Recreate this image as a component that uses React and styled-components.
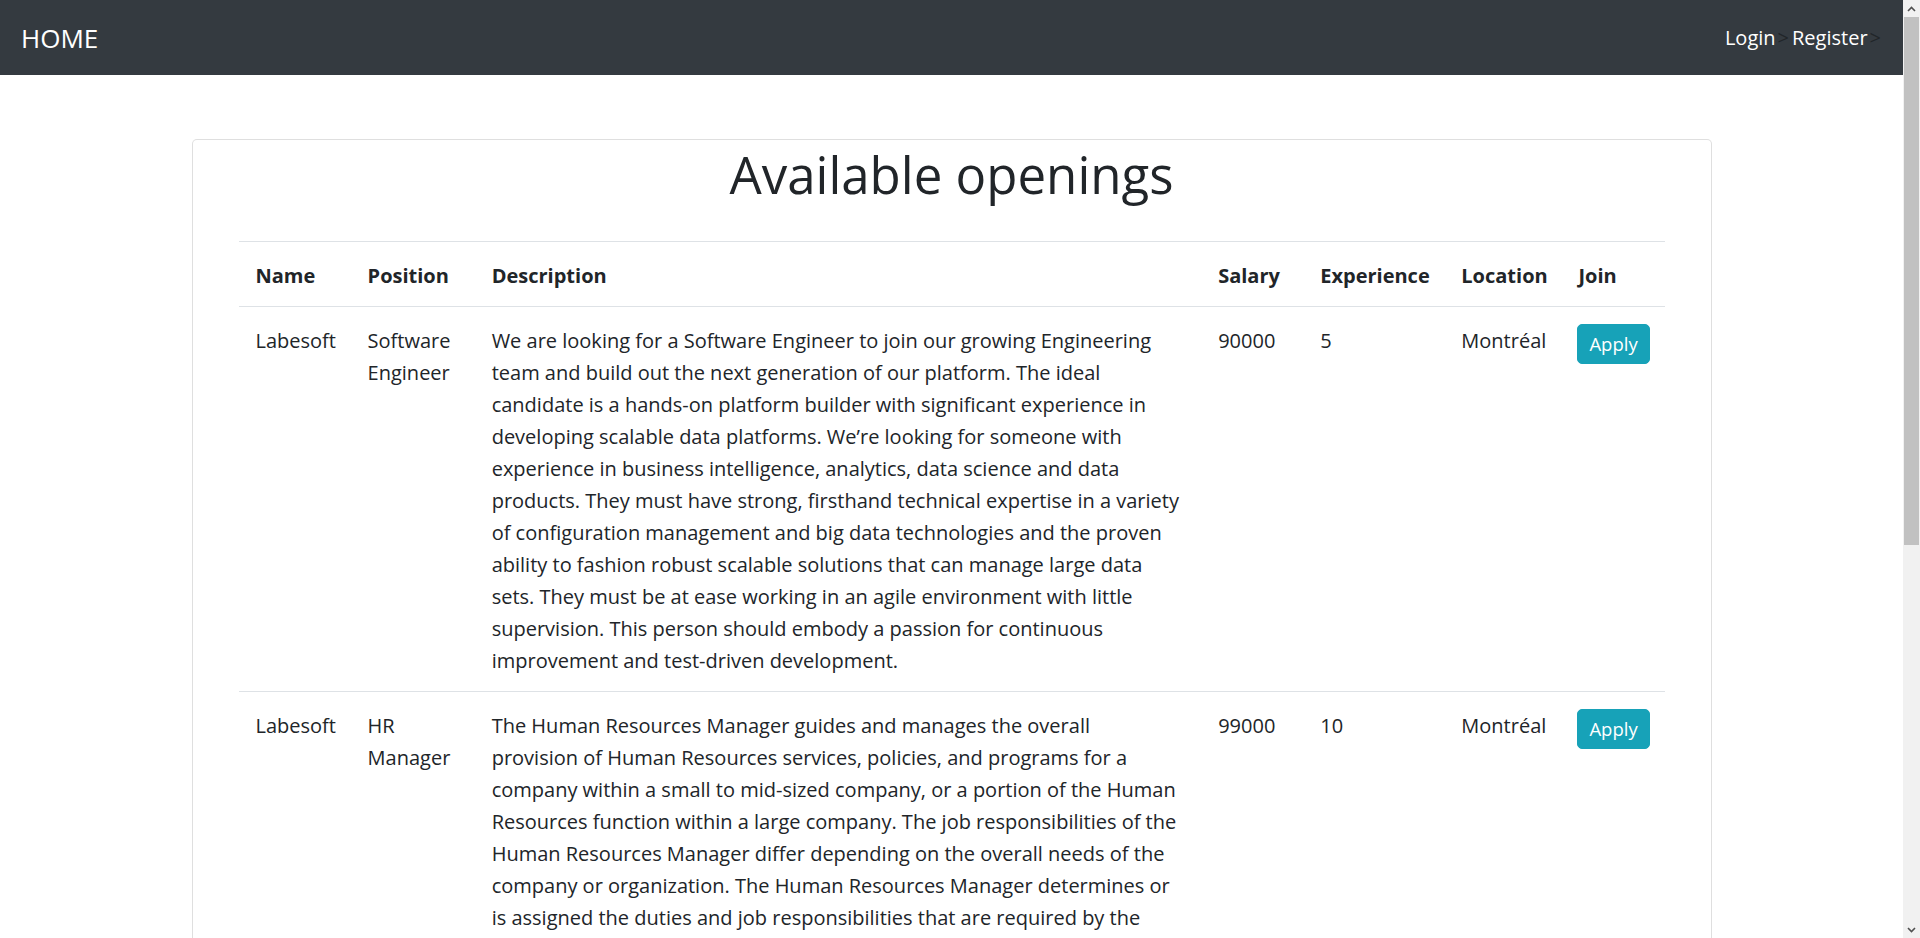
import React from "react";
import styled, { createGlobalStyle } from "styled-components";

const GlobalStyle = createGlobalStyle`
  html, body {
    margin: 0;
    padding: 0;
    background: #fff;
  }
  body {
    font-family: "Open Sans", "Noto Sans", sans-serif;
    color: #212529;
    font-size: 20px;
    line-height: 32px;
  }
  * { box-sizing: border-box; }
`;

const Page = styled.div`
  margin-right: 17px;
`;

const NavBar = styled.nav`
  height: 75px;
  background: #343a40;
  display: flex;
  align-items: center;
  justify-content: space-between;
  padding: 0 22px 0 21px;
`;

const Brand = styled.a`
  color: #fff;
  font-size: 26px;
  line-height: 34px;
  text-decoration: none;
  padding-top: 1px;
`;

const NavLinks = styled.div`
  display: flex;
  align-items: center;
  line-height: 30px;
  font-size: 20px;
`;

const NavLink = styled.a`
  color: #fff;
  text-decoration: none;
  margin-left: ${(p) => (p.$gap ? "3px" : "0")};
`;

const Caret = styled.span`
  color: #212529;
  margin-left: 2px;
`;

const Card = styled.section`
  width: 1520px;
  margin: 64px auto 0;
  border: 1px solid rgba(0, 0, 0, 0.125);
  border-radius: 5px;
  padding: 2px 46px 24px;
  background: #fff;
`;

const Title = styled.h1`
  margin: 0 0 35px;
  font-size: 51px;
  font-weight: 400;
  line-height: 64px;
  text-align: center;
  color: #212529;
`;

const Table = styled.table`
  width: 100%;
  border-collapse: collapse;
  table-layout: fixed;
`;

const Th = styled.th`
  text-align: left;
  font-weight: 700;
  padding: 18px 16px 14px 17px;
  border-top: 1px solid #dee2e6;
  border-bottom: 1px solid #dee2e6;
  vertical-align: bottom;
  white-space: nowrap;
`;

const Td = styled.td`
  padding: 18px 16px 14px 17px;
  border-top: 1px solid #dee2e6;
  vertical-align: top;
`;

const DescLine = styled.span`
  display: block;
  white-space: nowrap;
`;

const ApplyButton = styled.button`
  display: block;
  margin-top: -1px;
  margin-left: -1px;
  height: 40px;
  padding: 0 11px;
  font-family: "Open Sans", "Noto Sans", sans-serif;
  font-size: 18.5px;
  line-height: 38px;
  color: #fff;
  background: #17a2b8;
  border: 1px solid #17a2b8;
  border-radius: 5px;
  cursor: pointer;
`;

const ScrollBar = styled.div`
  position: fixed;
  top: 0;
  right: 0;
  width: 17px;
  height: 100vh;
  background: #f1f1f1;
  display: flex;
  flex-direction: column;
`;

const ScrollArrow = styled.div`
  height: 17px;
  display: flex;
  align-items: center;
  justify-content: center;
  flex: none;
`;

const ScrollTrack = styled.div`
  flex: 1;
  padding: 0 1px;
`;

const ScrollThumb = styled.div`
  height: 528px;
  background: #c1c1c1;
`;

const columns = [
  { label: "Name", width: 112 },
  { label: "Position", width: 124 },
  { label: "Description", width: 726 },
  { label: "Salary", width: 102 },
  { label: "Experience", width: 141 },
  { label: "Location", width: 117 },
  { label: "Join", width: 103 },
];

const jobs = [
  {
    name: "Labesoft",
    position: "Software Engineer",
    description: [
      "We are looking for a Software Engineer to join our growing Engineering",
      "team and build out the next generation of our platform. The ideal",
      "candidate is a hands-on platform builder with significant experience in",
      "developing scalable data platforms. We’re looking for someone with",
      "experience in business intelligence, analytics, data science and data",
      "products. They must have strong, firsthand technical expertise in a variety",
      "of configuration management and big data technologies and the proven",
      "ability to fashion robust scalable solutions that can manage large data",
      "sets. They must be at ease working in an agile environment with little",
      "supervision. This person should embody a passion for continuous",
      "improvement and test-driven development.",
    ],
    salary: "90000",
    experience: "5",
    location: "Montréal",
  },
  {
    name: "Labesoft",
    position: "HR Manager",
    description: [
      "The Human Resources Manager guides and manages the overall",
      "provision of Human Resources services, policies, and programs for a",
      "company within a small to mid-sized company, or a portion of the Human",
      "Resources function within a large company. The job responsibilities of the",
      "Human Resources Manager differ depending on the overall needs of the",
      "company or organization. The Human Resources Manager determines or",
      "is assigned the duties and job responsibilities that are required by the",
      "organization.",
    ],
    salary: "99000",
    experience: "10",
    location: "Montréal",
  },
];

function Chevron({ down }) {
  return (
    <svg width="9" height="6" viewBox="0 0 9 6">
      <path
        d={down ? "M1 1 L4.5 4.5 L8 1" : "M1 5 L4.5 1.5 L8 5"}
        fill="none"
        stroke="#505050"
        strokeWidth="1.6"
      />
    </svg>
  );
}

export default function App() {
  return (
    <>
      <GlobalStyle />
      <Page>
        <NavBar>
          <Brand href="#">HOME</Brand>
          <NavLinks>
            <NavLink href="#">Login</NavLink>
            <Caret>&gt;</Caret>
            <NavLink href="#" $gap>
              Register
            </NavLink>
            <Caret>&gt;</Caret>
          </NavLinks>
        </NavBar>
        <Card>
          <Title>Available openings</Title>
          <Table>
            <colgroup>
              {columns.map((c) => (
                <col key={c.label} style={{ width: c.width }} />
              ))}
            </colgroup>
            <thead>
              <tr>
                {columns.map((c) => (
                  <Th key={c.label}>{c.label}</Th>
                ))}
              </tr>
            </thead>
            <tbody>
              {jobs.map((j, i) => (
                <tr key={i}>
                  <Td>{j.name}</Td>
                  <Td>{j.position}</Td>
                  <Td>
                    {j.description.map((line, k) => (
                      <DescLine key={k}>{line}</DescLine>
                    ))}
                  </Td>
                  <Td>{j.salary}</Td>
                  <Td>{j.experience}</Td>
                  <Td>{j.location}</Td>
                  <Td>
                    <ApplyButton>Apply</ApplyButton>
                  </Td>
                </tr>
              ))}
            </tbody>
          </Table>
        </Card>
      </Page>
      <ScrollBar aria-hidden="true">
        <ScrollArrow>
          <Chevron />
        </ScrollArrow>
        <ScrollTrack>
          <ScrollThumb />
        </ScrollTrack>
        <ScrollArrow>
          <Chevron down />
        </ScrollArrow>
      </ScrollBar>
    </>
  );
}
